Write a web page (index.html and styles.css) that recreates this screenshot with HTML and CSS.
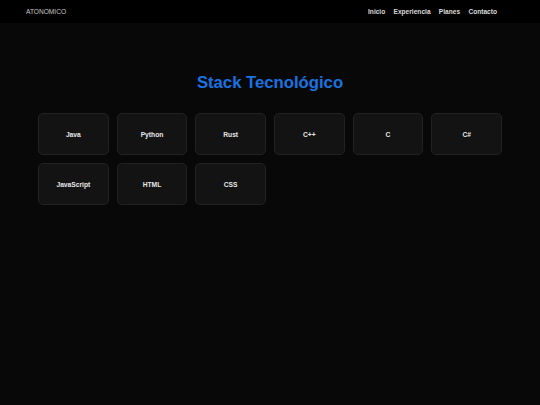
FILE: index.html
```html
<!DOCTYPE html>
<html lang="es">
<head>
<meta charset="utf-8">
<title>Atonomico</title>
<link rel="stylesheet" href="styles.css">
</head>
<body>
<header class="topbar">
  <div class="logo">ATONOMICO</div>
  <nav class="nav">
    <a href="#">Inicio</a>
    <a href="#">Experiencia</a>
    <a href="#">Planes</a>
    <a href="#">Contacto</a>
  </nav>
</header>
<main class="main">
  <h1 class="title">Stack Tecnológico</h1>
  <div class="grid">
    <div class="card">Java</div>
    <div class="card">Python</div>
    <div class="card">Rust</div>
    <div class="card">C++</div>
    <div class="card">C</div>
    <div class="card">C#</div>
    <div class="card">JavaScript</div>
    <div class="card">HTML</div>
    <div class="card">CSS</div>
  </div>
</main>
</body>
</html>
```

FILE: styles.css
```css
html, body {
  margin: 0;
  padding: 0;
}
body {
  background: #080808;
  font-family: "Liberation Sans", Arial, sans-serif;
  color: #e6e6e6;
  min-height: 405px;
}
.topbar {
  height: 23px;
  background: #000;
  display: flex;
  align-items: center;
  justify-content: space-between;
  padding: 0 43px 0 26px;
}
.logo {
  font-size: 6.6px;
  color: #c8c8c8;
}
.nav {
  display: flex;
  gap: 8.3px;
}
.nav a {
  font-size: 6.6px;
  font-weight: bold;
  color: #dcdcdc;
  text-decoration: none;
}
.main {
  padding: 50px 38px 0;
}
.title {
  margin: 0 0 20px;
  text-align: center;
  font-size: 16.7px;
  font-weight: bold;
  color: #1a73e0;
}
.grid {
  display: grid;
  grid-template-columns: repeat(6, 1fr);
  gap: 8px;
}
.card {
  height: 42px;
  box-sizing: border-box;
  background: #131313;
  border: 1px solid #222;
  border-radius: 5px;
  display: flex;
  align-items: center;
  justify-content: center;
  font-size: 6.7px;
  font-weight: bold;
  color: #e8e8e8;
}
```
